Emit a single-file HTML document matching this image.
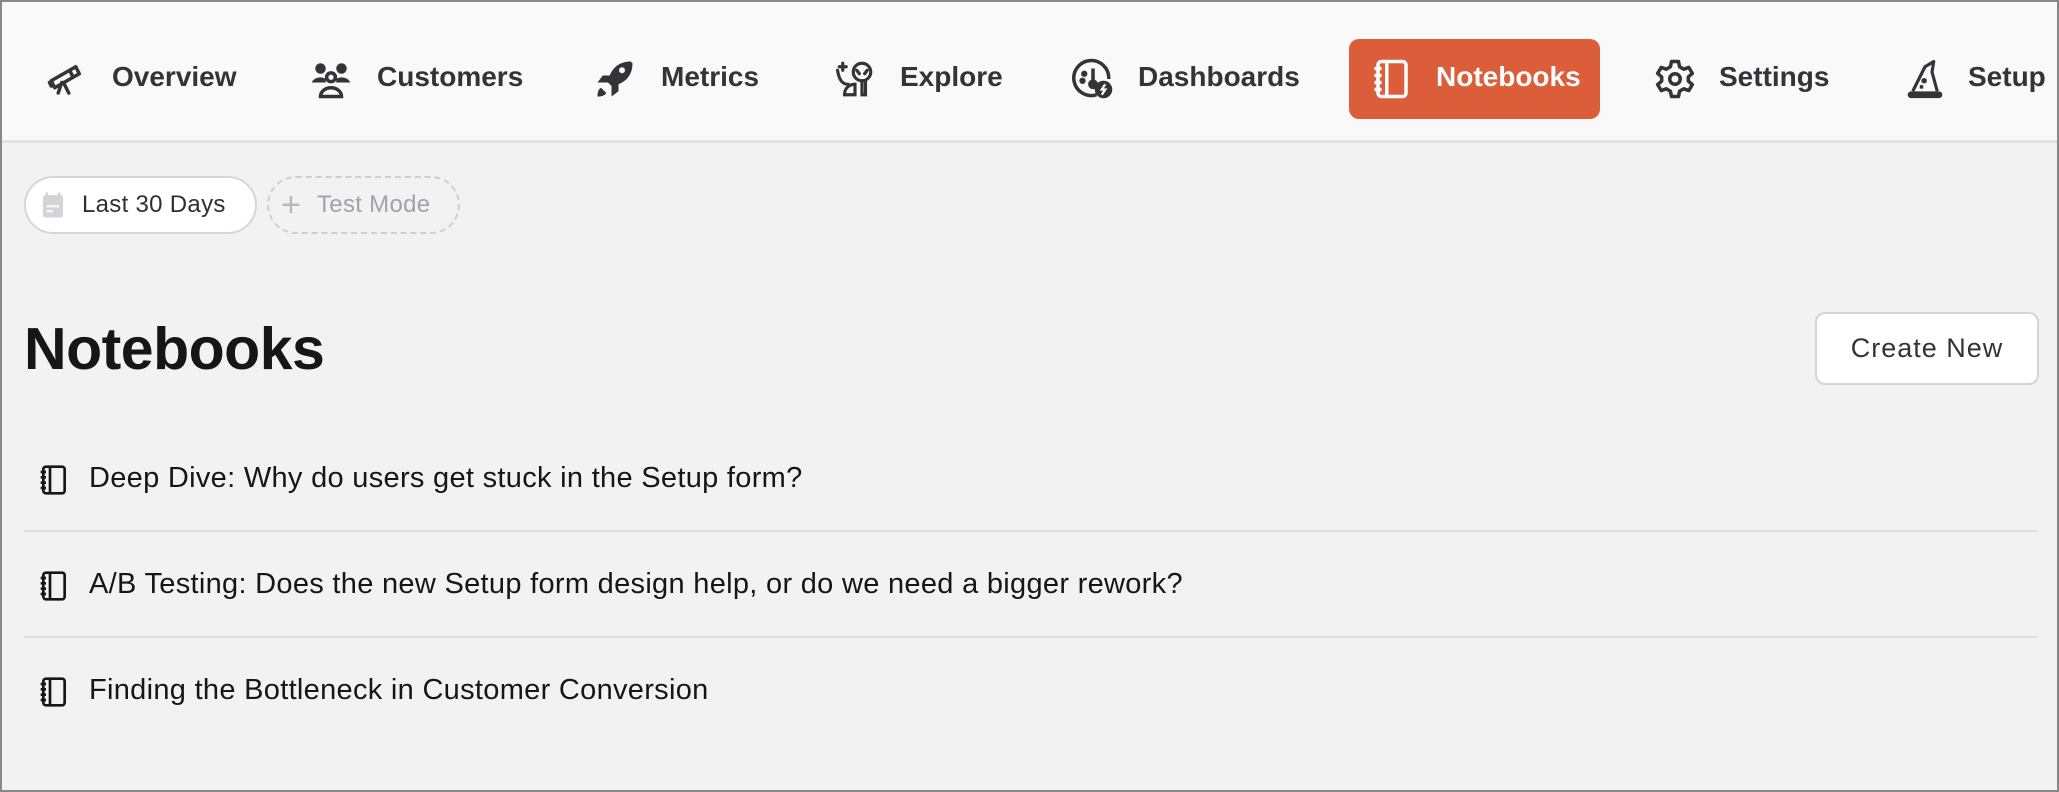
<!DOCTYPE html>
<html><head><meta charset="utf-8">
<style>
*{box-sizing:border-box;margin:0;padding:0}
html,body{width:2059px;height:792px;overflow:hidden}
body{background:#f2f2f2;font-family:"Liberation Sans",sans-serif;color:#2f2f35;position:relative;border:2px solid #888}
.nav{position:absolute;left:0;top:0;width:2055px;height:141px;background:#f9f9f9;border-bottom:3px solid #e2e2e2}
.item{position:absolute;top:37px;height:80px;display:flex;align-items:center;font-weight:bold;font-size:28px;color:#333338;white-space:nowrap}
.item svg{position:absolute;top:19px;width:42px;height:42px}
.item span{position:absolute;top:22px}
.active{background:#dc5d3a;border-radius:10px;color:#fff}
.pill{position:absolute;top:174px;height:58px;border-radius:29px;font-size:24px;display:flex;align-items:center}
h1{position:absolute;left:22px;top:313px;font-size:59px;font-weight:bold;color:#161616;letter-spacing:-0.5px}
.btn{position:absolute;left:1813px;top:310px;width:224px;height:73px;background:#fff;border:2px solid #d4d4d8;border-radius:10px;font-size:27px;letter-spacing:1px;display:flex;align-items:center;justify-content:center;color:#333338}
.row{position:absolute;left:22px;width:2014px;height:106px}
.row.div{border-bottom:2px solid #e0e0e0}
.row span{position:absolute;left:65px;top:-1px;line-height:106px;font-size:29px;color:#161616;letter-spacing:0.3px}
.row svg{position:absolute;left:14px;top:38px;width:32px;height:32px}
</style></head><body>
<div class="nav">
 <div class="item" style="left:44px">
  <svg viewBox="0 0 24 24" style="left:0" fill="none" stroke="#333338" stroke-width="2" stroke-linejoin="round" stroke-linecap="round"><path d="M3 13l14-8 2 4-14 8z M2 14l1 2 M14 8l1.5 3"/><path d="M9 14l-2 6 M10 14l3 6"/></svg>
  <span style="left:66px">Overview</span></div>
 <div class="item" style="left:308px">
  <svg viewBox="0 0 24 24" style="left:0" fill="#333338"><circle cx="6" cy="6" r="3"/><circle cx="18" cy="6" r="3"/><path d="M1 14a5 4 0 0 1 8-2v2z M15 12a5 4 0 0 1 8 2h-8z"/><circle cx="12" cy="11" r="2.5" fill="none" stroke="#333338" stroke-width="2"/><path d="M6 22a6 5 0 0 1 12 0z" fill="none" stroke="#333338" stroke-width="2"/></svg>
  <span style="left:67px">Customers</span></div>
 <div class="item" style="left:592px">
  <svg viewBox="0 0 24 24" style="left:0" fill="#333338"><path d="M21 2c-6 0-10 3-12 8H5l-3 4h6l2 2v6l4-3v-4c5-2 8-6 8-12z"/><path d="M4 17c-2 1-2 4-2 5 1 0 4 0 5-2z"/><circle cx="16" cy="7" r="1.7" fill="#f9f9f9"/></svg>
  <span style="left:67px">Metrics</span></div>
 <div class="item" style="left:832px">
  <svg viewBox="0 0 24 24" style="left:0" fill="none" stroke="#333338" stroke-width="1.8" stroke-linecap="round"><circle cx="16" cy="8" r="5"/><path d="M13 7l1.5 2 M19 7l-1.5 2"/><path d="M2 7c1 6 3 8 6 8 M6 21c0-4 3-6 6-6v6z M16 13v8h2v-8 M5 3v4 M3 5h4"/></svg>
  <span style="left:66px">Explore</span></div>
 <div class="item" style="left:1070px">
  <svg viewBox="0 0 24 24" style="left:0" fill="none" stroke="#333338" stroke-width="2"><path d="M14 21A10 10 0 1 1 21 12"/><path d="M12 6v8"/><circle cx="12" cy="15" r="1.8" fill="#333338"/><circle cx="7" cy="9" r="0.8" fill="#333338"/><circle cx="6" cy="13" r="0.8" fill="#333338"/><circle cx="18" cy="18" r="5" fill="#333338" stroke="none"/><path d="M19 15l-2 3h2l-2 3" stroke="#fff" stroke-width="1.3"/></svg>
  <span style="left:66px">Dashboards</span></div>
 <div class="item active" style="left:1347px;width:251px">
  <svg viewBox="0 0 24 24" style="left:22px" fill="none" stroke="#fff" stroke-width="2" stroke-linejoin="round"><rect x="4" y="2" width="16" height="20" rx="2"/><path d="M9 2v20 M2 6h4 M2 10h4 M2 14h4 M2 18h4"/></svg>
  <span style="left:87px">Notebooks</span></div>
 <div class="item" style="left:1652px">
  <svg viewBox="0 0 24 24" style="left:0" fill="none" stroke="#333338" stroke-width="2" stroke-linejoin="round"><path d="M10 2h4l.6 3 2.4 1.4 2.9-1 2 3.4-2.3 2v2.4l2.3 2-2 3.4-2.9-1L14.6 19l-.6 3h-4l-.6-3L7 17.6l-2.9 1-2-3.4 2.3-2v-2.4l-2.3-2 2-3.4 2.9 1L9.4 5z"/><circle cx="12" cy="12" r="3"/></svg>
  <span style="left:65px">Settings</span></div>
 <div class="item" style="left:1902px">
  <svg viewBox="0 0 24 24" style="left:0" fill="none" stroke="#333338" stroke-width="1.8" stroke-linejoin="round"><path d="M5 19L12 5l5-3-1 6 3 11"/><path d="M10 13h3 M11.5 11.5v3 M9 16.5h2 M10 15.5v2"/><rect x="3" y="20" width="18" height="2" rx="1" fill="#333338"/></svg>
  <span style="left:64px">Setup</span></div>
</div>

<div class="pill" style="left:22px;width:233px;background:#fff;border:2px solid #d6d6da">
 <svg viewBox="0 0 24 24" style="position:absolute;left:12px;top:12px;width:30px;height:30px"><rect x="4" y="4" width="16" height="18" rx="2" fill="#d4d4d8"/><path d="M7 2v4 M17 2v4" stroke="#d4d4d8" stroke-width="2"/><path d="M7 13h10 M7 17h5" stroke="#f4f4f5" stroke-width="2"/></svg>
 <span style="position:absolute;left:56px;color:#2f2f35;letter-spacing:0.3px">Last 30 Days</span></div>
<div class="pill" style="left:265px;width:193px;border:2px dashed #cfcfd3;color:#a2a2a8">
 <span style="position:absolute;left:12px;font-size:34px;top:8px;font-weight:300;color:#b8b8bc">+</span>
 <span style="position:absolute;left:48px;letter-spacing:0.3px">Test Mode</span></div>

<h1>Notebooks</h1>
<div class="btn">Create New</div>

<div class="row div" style="top:424px"><svg viewBox="0 0 24 24" fill="none" stroke="#161616" stroke-width="2" stroke-linejoin="round"><rect x="4" y="2" width="16" height="20" rx="2"/><path d="M9 2v20 M2 6h4 M2 10h4 M2 14h4 M2 18h4"/></svg><span>Deep Dive: Why do users get stuck in the Setup form?</span></div>
<div class="row div" style="top:530px"><svg viewBox="0 0 24 24" fill="none" stroke="#161616" stroke-width="2" stroke-linejoin="round"><rect x="4" y="2" width="16" height="20" rx="2"/><path d="M9 2v20 M2 6h4 M2 10h4 M2 14h4 M2 18h4"/></svg><span>A/B Testing: Does the new Setup form design help, or do we need a bigger rework?</span></div>
<div class="row" style="top:636px"><svg viewBox="0 0 24 24" fill="none" stroke="#161616" stroke-width="2" stroke-linejoin="round"><rect x="4" y="2" width="16" height="20" rx="2"/><path d="M9 2v20 M2 6h4 M2 10h4 M2 14h4 M2 18h4"/></svg><span>Finding the Bottleneck in Customer Conversion</span></div>
</body></html>
